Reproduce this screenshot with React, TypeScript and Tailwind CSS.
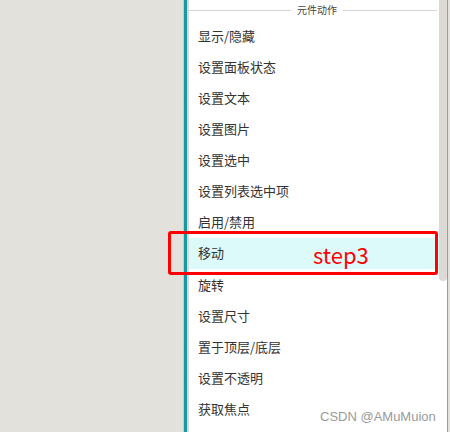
const items = [
  '显示/隐藏',
  '设置面板状态',
  '设置文本',
  '设置图片',
  '设置选中',
  '设置列表选中项',
  '启用/禁用',
  '移动',
  '旋转',
  '设置尺寸',
  '置于顶层/底层',
  '设置不透明',
  '获取焦点',
]

export default function App() {
  return (
    <div
      className="relative flex h-[432px] w-[450px] overflow-hidden bg-[#e3e1dc]"
      style={{ fontFamily: '"Noto Sans CJK SC", "Noto Sans", sans-serif' }}
    >
      <div className="w-[184px] shrink-0 border-r border-[#cfcdc8]" />
      <div className="w-[3px] shrink-0 bg-[#16999f]" />
      <div className="w-[2px] shrink-0 bg-[#d9d9d9]" />

      <div className="flex w-[250px] shrink-0 flex-col bg-white">
        <div className="flex h-[20px] items-center pr-[2px]">
          <div className="h-px flex-1 bg-[#d4d4d4]" />
          <span className="px-[6px] text-[10px] leading-none text-[#444]">元件动作</span>
          <div className="h-px w-[94px] bg-[#d4d4d4]" />
        </div>
        <ul>
          {items.map((t) => (
            <li
              key={t}
              className={
                'flex h-[31.1px] items-center pl-[9px] text-[13px] text-[#333] ' +
                (t === '移动' ? 'bg-[#dcfafa]' : '')
              }
            >
              {t}
            </li>
          ))}
        </ul>
      </div>

      <div className="w-[8px] shrink-0 bg-white">
        <div className="h-[281px] w-[8px] rounded-b-[4px] bg-[#dddad5]" />
      </div>
      <div className="w-px shrink-0 bg-[#9c9c9c]" />
      <div className="w-px shrink-0 bg-[#e3e1dc]" />

      <div className="absolute left-[168px] top-[231px] h-[44px] w-[270px] rounded-[3px] border-[3px] border-[#ff0000]" />
      <span className="absolute left-[313px] top-[240px] text-[22px] leading-[28px] text-[#ff0000]">
        step3
      </span>

      <span
        className="absolute left-[320px] top-[408px] text-[13px] leading-[18px] text-[#9a9a9a]"
        style={{ fontFamily: '"Liberation Sans", Arial, sans-serif' }}
      >
        CSDN @AMuMuion
      </span>
    </div>
  )
}
